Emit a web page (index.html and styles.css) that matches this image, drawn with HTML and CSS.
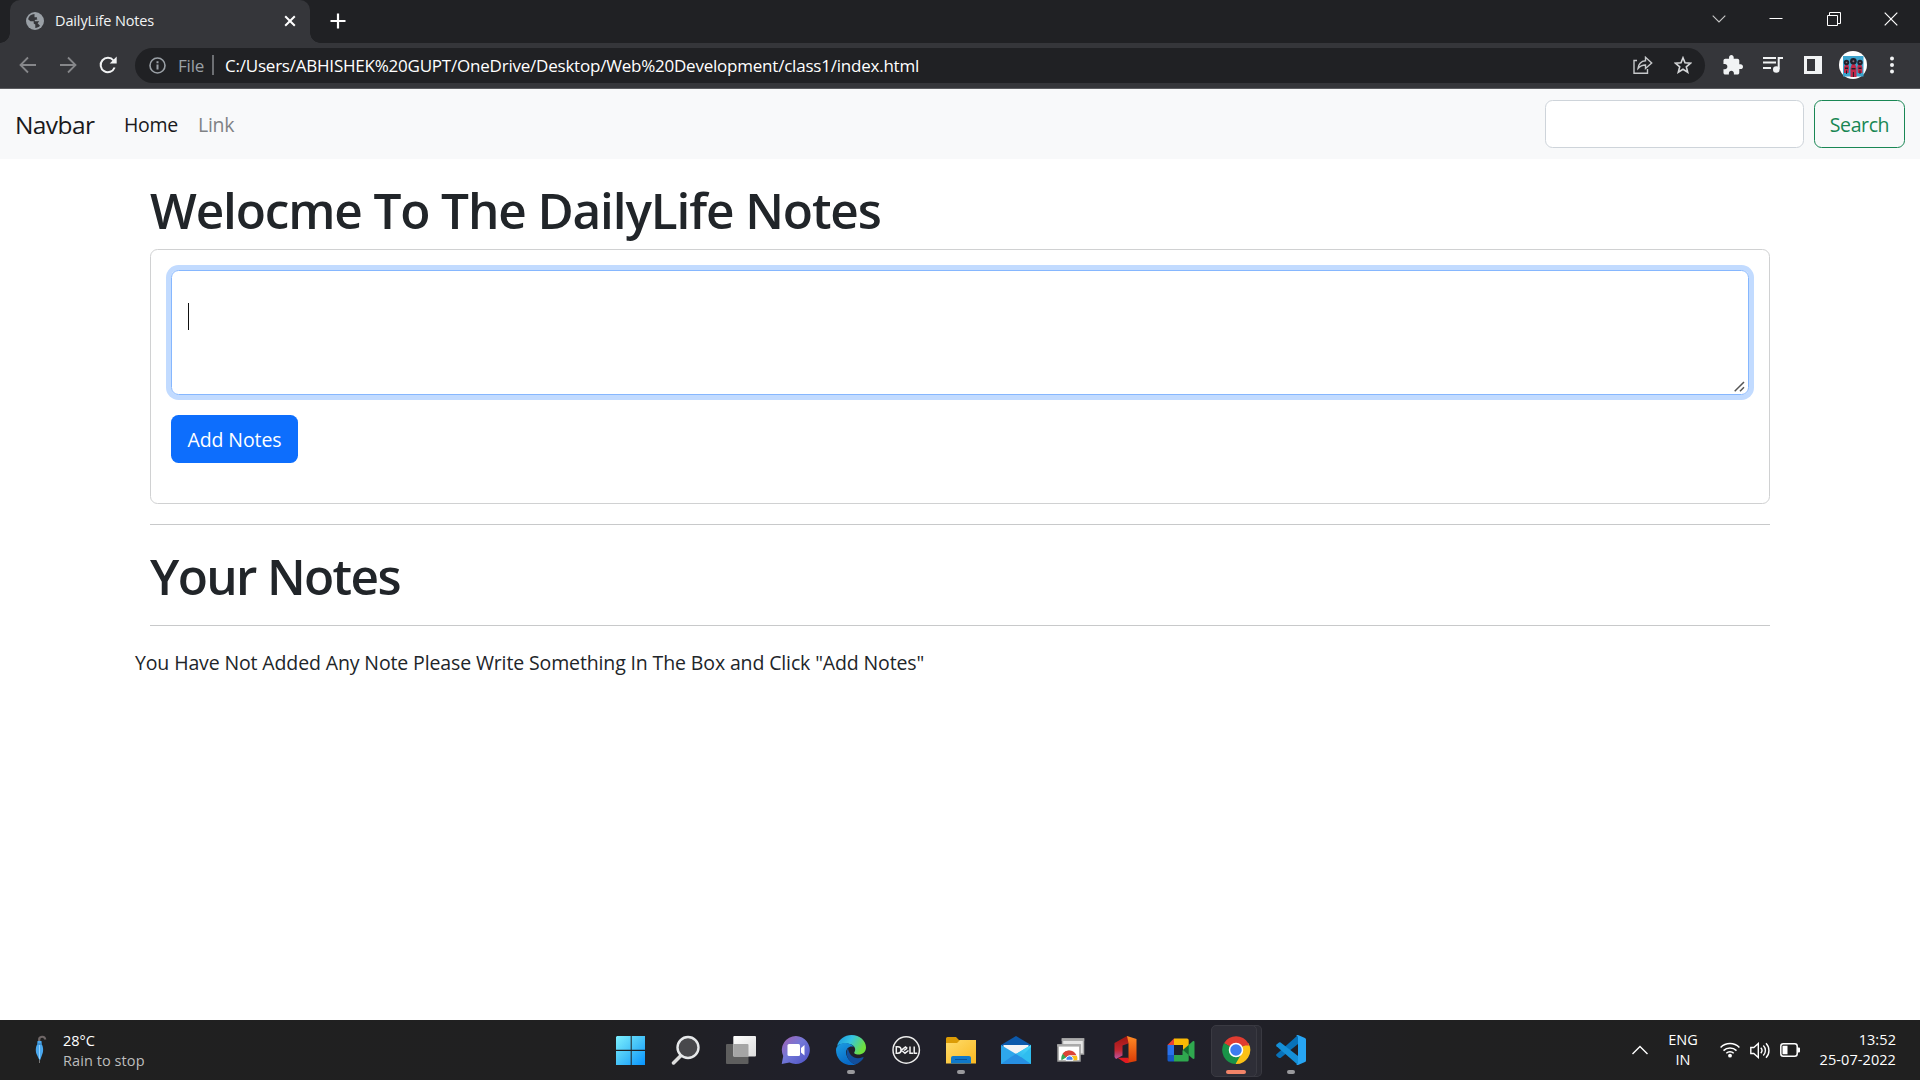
FILE: index.html
```html
<!DOCTYPE html>
<html lang="en">
<head>
<meta charset="utf-8">
<title>DailyLife Notes</title>
<link rel="stylesheet" href="styles.css">
</head>
<body>
<div class="screen">
  <header class="tabstrip">
    <div class="tab">
      <svg class="globe" width="18" height="18" viewBox="0 0 18 18"><circle cx="9" cy="9" r="9" fill="#9aa0a6"/><path d="M8.500 2C5 2.200 2.600 4.300 2.100 7.200L4.500 9.300h3.200v2.200l1.600 1v3.400c2-.1 3.500-.8 4.700-2.200l-2.400-2.400 1.700-2H8.800V8l2.500-.6V5.200H8.500z" fill="#35363a"/><path d="M9 2l2.500 2.200-.8 2 2 1.600.6 1.900 2.700-.2C16.200 5.200 13.200 2 9 2z" fill="#9aa0a6"/></svg>
      <span class="tab-title">DailyLife Notes</span>
      <svg class="tab-close" width="12" height="12" viewBox="0 0 12 12"><path d="M1.200 1.200l9.600 9.600M10.800 1.200l-9.600 9.600" stroke="#fff" stroke-width="2"/></svg>
    </div>
    <svg class="new-tab" width="16" height="16" viewBox="0 0 16 16"><path d="M8 .5v15M.5 8h15" stroke="#fff" stroke-width="2.200"/></svg>
    <div class="window-buttons">
      <svg width="14" height="14" viewBox="0 0 14 14"><path d="M.7 3.700 7 10l6.300-6.300" fill="none" stroke="#c8c8c8" stroke-width="1.100"/></svg>
      <svg width="14" height="14" viewBox="0 0 14 14"><path d="M.5 6.500h13" stroke="#fff"/></svg>
      <svg width="14" height="14" viewBox="0 0 14 14"><path d="M.5 3.500h10v10H.5zM2.500 3.500v-3h11v11h-3" fill="none" stroke="#fff"/></svg>
      <svg width="14" height="14" viewBox="0 0 14 14"><path d="M.7.7l12.600 12.600M13.300.7.7 13.300" stroke="#fff" stroke-width="1.200"/></svg>
    </div>
  </header>

  <div class="toolbar">
    <svg class="nav-back" width="18" height="18" viewBox="0 0 18 18"><path d="M17 9H2M9 1.500 1.500 9 9 16.500" fill="none" stroke="#86878a" stroke-width="1.800"/></svg>
    <svg class="nav-forward" width="18" height="18" viewBox="0 0 18 18"><path d="M1 9h15M9 1.500 16.500 9 9 16.500" fill="none" stroke="#86878a" stroke-width="1.800"/></svg>
    <svg class="nav-reload" width="18" height="18" viewBox="0 0 18 18"><path d="M15.600 11.500A7.200 7.200 0 1 1 14.500 4.500" fill="none" stroke="#f1f3f4" stroke-width="2"/><path d="M17.700.5v7h-7z" fill="#f1f3f4"/></svg>
    <div class="omnibox">
      <svg class="info" width="17" height="17" viewBox="0 0 17 17"><circle cx="8.500" cy="8.500" r="7.500" fill="none" stroke="#9aa0a6" stroke-width="1.600"/><path d="M8.500 7.500v5M8.500 4.200v2" stroke="#9aa0a6" stroke-width="2"/></svg>
      <span class="scheme">File</span>
      <span class="divider"></span>
      <span class="url">C:/Users/ABHISHEK%20GUPT/OneDrive/Desktop/Web%20Development/class1/index.html</span>
      <svg class="share" width="20" height="18" viewBox="0 0 20 18"><path d="M4 4.500H1v12.700h13.500V13M5 12.500C5.200 8.500 8 5 12.500 4.800V1.300L18.700 7l-6.200 5.500V9C9 9 7 10.200 5 12.500z" fill="none" stroke="#c6c8ca" stroke-width="1.400"/></svg>
      <svg class="star" width="18" height="18" viewBox="0 0 18 18"><path d="M9 1.800l2 5 5.600.4-4.300 3.600 1.400 5.400L9 13.300l-4.700 2.900 1.400-5.400L1.400 7.200 7 6.800z" fill="none" stroke="#d4d6d8" stroke-width="1.600"/></svg>
    </div>
    <div class="actions">
      <svg width="20" height="20" viewBox="1.500 1 21.500 21.500"><path fill="#f1f3f4" d="M20.500 11H19V7c0-1.100-.9-2-2-2h-4V3.500C13 2.120 11.880 1 10.500 1S8 2.120 8 3.500V5H4c-1.100 0-1.990.9-1.990 2v3.800H3.500c1.490 0 2.700 1.210 2.700 2.700s-1.210 2.700-2.700 2.700H2V20c0 1.100.9 2 2 2h3.800v-1.500c0-1.490 1.210-2.700 2.700-2.700 1.490 0 2.700 1.210 2.700 2.700V22H17c1.100 0 2-.9 2-2v-4h1.500c1.380 0 2.500-1.120 2.500-2.500S21.880 11 20.500 11z"/></svg>
      <svg width="20" height="20" viewBox="0 0 20 20"><path d="M0 3h13M0 7.500h13M0 13h8" stroke="#f1f3f4" stroke-width="2"/><path d="M15.700 14V3H20" fill="none" stroke="#f1f3f4" stroke-width="2"/><circle cx="13.300" cy="14.500" r="3.300" fill="#f1f3f4"/></svg>
      <svg width="20" height="20" viewBox="0 0 20 20"><path fill="#f1f3f4" fill-rule="evenodd" d="M1 1h18v18H1zM4 4v12h8V4z"/></svg>
      <svg class="avatar" width="28" height="28" viewBox="0 0 28 28"><circle cx="14" cy="14" r="14" fill="#fff"/><path d="M4 5h20.500v20.500H4z" fill="#3da5cf"/><g fill="#c4284a"><path d="M5 22v-6l1.500-3h2.500l1 3-.5 6zM18.800 22l-.5-6 1-3h2.500l1.500 3v6z"/><path d="M11.500 26v-9l1.500-4h3l1.500 4v9z"/></g><g fill="#20202c"><circle cx="7.500" cy="11.500" r="2.700"/><circle cx="21" cy="11.500" r="2.700"/><circle cx="14.400" cy="10.200" r="3.300"/><path d="M12.500 17h4v1.500h-4zM6 16.500h3V18H6zM19.500 16.500h3V18h-3zM7 19.500h1V23H7zM20.500 19.500h1V23h-1zM13.900 21h1v5h-1z"/></g><g fill="#8b6b7a"><circle cx="7.500" cy="11.500" r=".8"/><circle cx="21" cy="11.500" r=".8"/><circle cx="14.400" cy="10.200" r="1"/></g></svg>
      <svg class="menu" width="6" height="18" viewBox="0 0 6 18"><g fill="#f1f3f4"><circle cx="3" cy="2.500" r="2"/><circle cx="3" cy="9" r="2"/><circle cx="3" cy="15.500" r="2"/></g></svg>
    </div>
  </div>

  <nav class="navbar">
    <a class="brand">Navbar</a>
    <a class="nav-link active">Home</a>
    <a class="nav-link">Link</a>
    <form class="search">
      <input class="search-input" type="text" aria-label="Search">
      <button class="search-button" type="button">Search</button>
    </form>
  </nav>

  <main class="container">
    <h1 class="title">Welocme To The DailyLife Notes</h1>
    <section class="card">
      <div class="note-box">
        <span class="caret"></span>
        <svg class="grip" width="11" height="11" viewBox="0 0 11 11"><path d="M.7 10.300l9.300-9.300M6 10.300l4-4" stroke="#555" stroke-width="1.500"/></svg>
      </div>
      <button class="add-button" type="button">Add Notes</button>
    </section>
    <hr class="rule">
    <h1 class="subtitle">Your Notes</h1>
    <hr class="rule">
    <p class="empty">You Have Not Added Any Note Please Write Something In The Box and Click "Add Notes"</p>
  </main>

  <footer class="taskbar">
    <div class="weather">
      <svg width="12" height="30" viewBox="0 0 12 30"><path d="M5 7V5a3 3 0 0 1 6-.5" fill="none" stroke="#6f6767" stroke-width="2.200" transform="translate(-.8)"/><path d="M2.500 6h4l.3 3.500C8.500 12 8.600 17 7 20L4.800 26 2 20C.4 17 .4 12 2.200 9.500z" fill="#4aa8ee"/><path d="M4.500 10v14" stroke="#8fd0ff"/><path d="M2 9h5" stroke="#2f78b5"/><path d="M4.500 25v3" stroke="#777"/></svg>
      <div class="weather-text">
        <span class="temp">28°C</span>
        <span class="cond">Rain to stop</span>
      </div>
    </div>
    <div class="apps">
      <div class="app"><svg width="30" height="30" viewBox="0 0 30 30"><defs><linearGradient id="win" x1="0" y1="0" x2="1" y2="1"><stop offset="0" stop-color="#7df0ff"/><stop offset=".5" stop-color="#46c3f8"/><stop offset="1" stop-color="#0794ff"/></linearGradient></defs><path d="M1 1h13.700v13.700H0V2zM15.700 1h13.300v13.700H15.700zM0 15.900h14.700V30H0zM15.700 15.900h13.300V30H15.700z" fill="url(#win)"/></svg></div>
      <div class="app"><svg width="30" height="30" viewBox="0 0 30 30"><path d="M11 19.500 2.500 28" stroke="#ddd" stroke-width="3.500" stroke-linecap="round"/><circle cx="17" cy="12.500" r="10.500" fill="#48484c" stroke="#e6e8ea" stroke-width="2.400"/></svg></div>
      <div class="app"><svg width="30" height="30" viewBox="0 0 30 30"><defs><linearGradient id="tv" x1="0" y1="0" x2="1" y2="1"><stop offset="0" stop-color="#fff"/><stop offset="1" stop-color="#dcdcdc"/></linearGradient></defs><rect y="9" width="22.500" height="20" rx="1" fill="#5e5e5e"/><rect x="7.300" y="1" width="22.700" height="20.500" rx="1" fill="url(#tv)"/><path d="M7.300 9H21.500a1 1 0 0 1 1 1v11.500H7.300z" fill="#a5a5a5"/></svg></div>
      <div class="app"><svg width="30" height="30" viewBox="0 0 30 30"><defs><linearGradient id="chat" x1="0" y1="0" x2="1" y2="1"><stop offset="0" stop-color="#a75fae"/><stop offset=".45" stop-color="#7378d8"/><stop offset="1" stop-color="#4b50c4"/></linearGradient></defs><path d="M15 1a14 14 0 1 1-6.500 26.500L.7 29l1.500-8A14 14 0 0 1 15 1z" fill="url(#chat)"/><rect x="6.500" y="9" width="12.500" height="12" rx="1.500" fill="#fff"/><path d="M20 13l3.500-3v10.500L20 17.500z" fill="#fff"/></svg></div>
      <div class="app running"><svg width="30" height="30" viewBox="0 0 30 30"><defs><linearGradient id="e1" x1="0" y1="0" x2="1" y2=".4"><stop offset="0" stop-color="#1793df"/><stop offset=".5" stop-color="#35c3e2"/><stop offset="1" stop-color="#6ee03e"/></linearGradient><linearGradient id="e2" x1="0" y1="0" x2=".5" y2="1"><stop offset="0" stop-color="#1b9de2"/><stop offset="1" stop-color="#0868c5"/></linearGradient></defs><path d="M1 11C3 4 8.500 0 15.500 0 24 0 30 6 30 12.500c0 4.500-3.500 7-7.500 7-3.500 0-5-1.500-4-2.500 1.500-2 1-7-5-8C8 8 3 9 1 11z" fill="url(#e1)"/><path d="M0 15C0 10.500 5 7.500 10 8c4 .3 7 2.200 8 4-5-2-10 2.500-7 9.500 2 4.500 7 8 9 8C9 32.500 0 25 0 15z" fill="url(#e2)"/><path d="M12 13c-3 5-1 13 7 16.500 4-1 7-4 8.500-6.500.5-1-.5-1-1-.7C19 25 13 21 12 13z" fill="#124f9d"/></svg></div>
      <div class="app"><svg width="30" height="30" viewBox="0 0 30 30"><circle cx="15.200" cy="15" r="13.200" fill="#242429" stroke="#ececec" stroke-width="1.500"/><path d="M5.300 11.800v6.400h1.600a3.200 3.200 0 0 0 0-6.400zM10.500 15.200l4-3.200 1.800 1.300M10.500 15.200l3.500 3 3.500-2.700M13 15.500l3.200-2.400M19 11.500v6.700h3M23.200 11.500v6.700h3" fill="none" stroke="#f2f2f2" stroke-width="1.500"/></svg></div>
      <div class="app running"><svg width="30" height="30" viewBox="0 0 30 30"><defs><linearGradient id="fold" x1="0" y1="0" x2="1" y2="1"><stop offset="0" stop-color="#ffdc6b"/><stop offset="1" stop-color="#f9b820"/></linearGradient></defs><path d="M0 3.500A1.500 1.500 0 0 1 1.500 2H10l3 3h16v12H0z" fill="#dc9c06"/><path d="M0 8h11l3-3h15.500a1 1 0 0 1 1 1v22.500H0z" fill="url(#fold)"/><path d="M5 28.500V23a2 2 0 0 1 2-2h16a2 2 0 0 1 2 2v5.500z" fill="#0f79ca"/><path d="M9 24.500h12" stroke="#07539b"/></svg></div>
      <div class="app"><svg width="30" height="30" viewBox="0 0 30 30"><defs><linearGradient id="mail" x1="0" y1="1" x2="1" y2="0"><stop offset="0" stop-color="#2fb5f0"/><stop offset="1" stop-color="#49dbf8"/></linearGradient></defs><path d="M0 10 15 1l15 9v9H0z" fill="#0c59ab"/><path d="M2.500 10h25v9L15 24 2.500 19z" fill="#f3f3f5"/><path d="M0 10l15 9-13 10H0z" fill="#2ea7ec"/><path d="M30 10l-15 9 13 10h2z" fill="#2fbdef"/><path d="M0 29l15-10.500L30 29z" fill="#278fe2"/><path d="M15 19 30 10v2L20 22z" fill="url(#mail)"/></svg></div>
      <div class="app"><svg width="30" height="30" viewBox="0 0 30 30"><path d="M6.500 4h21v15h-21z" fill="#e6e6e6" stroke="#aaa" stroke-width="1.500"/><path d="M5.700 3.300h22.500V6H5.700z" fill="#aaa"/><path d="M2 10h22v16H2z" fill="#fff" stroke="#999" stroke-width="1.500"/><path d="M1.200 9.300h23.500v2.300H1.200z" fill="#aaa"/><path d="M5.500 25.300a8 8 0 0 1 8-9.800v5z" fill="#34a853"/><path d="M13.500 21l7.300-.2c.7 1.200.8 3 .4 4.500H17z" fill="#fbc116"/><path d="M6.700 18.700A8 8 0 0 1 20.500 20.300h-7l-3.500 2z" fill="#dc4437"/><path d="M10 25.300a3.600 3.600 0 1 1 7 0z" fill="#4285f4" stroke="#fff"/></svg></div>
      <div class="app"><svg width="30" height="30" viewBox="0 0 30 30"><defs><linearGradient id="off" x1="0" y1="0" x2="0" y2="1"><stop offset="0" stop-color="#9d1510"/><stop offset=".6" stop-color="#c2262e"/><stop offset="1" stop-color="#b956a6"/></linearGradient><linearGradient id="off2" x1="0" y1="0" x2="0" y2="1"><stop offset="0" stop-color="#ff8b25"/><stop offset="1" stop-color="#d93a06"/></linearGradient></defs><path d="M3.500 8 16 1l2.500 2v5l-7 2.500v10L5 24l-1.500-2z" fill="url(#off)"/><path d="M16 1l9.500 3v22L16 28l-.5-3 2-1.500V8z" fill="url(#off2)"/><path d="M6.500 22.700h11V28h-3z" fill="#e21a22"/></svg></div>
      <div class="app"><svg width="30" height="30" viewBox="0 0 30 30"><path d="M1.500 10 8 3.500V10z" fill="#e94235"/><path d="M1.500 10H8v10H1.500z" fill="#2a71ea"/><path d="M1.500 20H8v6.500H3a1.500 1.500 0 0 1-1.500-1.500z" fill="#1559c5"/><path d="M8 3.500h13A1.700 1.700 0 0 1 22.700 5v10L17 19v-9H8z" fill="#fbb904"/><path d="M8 20h8.500v-4.500l6.200-3V25a1.500 1.500 0 0 1-1.500 1.500H8z" fill="#2fa84f"/><path d="M17 15l9.500-8.500c1-.8 2-.5 2 .5v16c0 1-1 1.300-2 .5z" fill="#2fa84f"/><path d="M17 15l5.700-5v10z" fill="#176b32"/></svg></div>
      <div class="app running active-app"><svg width="30" height="30" viewBox="0 0 30 30"><path d="M15 15 3 8.200A14 14 0 0 1 27.200 8.200z" fill="#e13c31"/><path d="M15 15 27.500 8.300A14 14 0 0 1 14.500 29z" fill="#fcc116"/><path d="M15 15l4.500 5.500-5 8.500A14 14 0 0 1 3 8z" fill="#199348"/><path d="M14 8h13.200c.4 1 .5 1.300.8 2.500H15z" fill="#e13c31"/><circle cx="15" cy="15" r="6.500" fill="#3c7cf0" stroke="#fff" stroke-width="1.500"/></svg></div>
      <div class="app running"><svg width="30" height="30" viewBox="0 0 30 30"><path d="M22 0v9L4.500 23 3 23 .5 21q-.7-1 0-1.700z" fill="#0872b9"/><path d="M.5 9.500 3 7.500q.8-.5 1.600 0L22 21v9L.5 11.200q-.7-1 0-1.700z" fill="#1590d8"/><path d="M22 0l7 3q1 .6 1 1.600v20.800q0 1-1 1.500L22 30q-1 .2-2-.8 2 .5 2-1.500V2.300q0-2-2-1.500 1-1 2-.8z" fill="#27a5f3"/></svg></div>
    </div>
    <div class="tray">
      <svg class="chev" width="16" height="16" viewBox="0 0 16 16"><path d="M.5 12 8 4.500l7.500 7.500" fill="none" stroke="#fff" stroke-width="1.400"/></svg>
      <div class="lang"><span>ENG</span><span>IN</span></div>
      <svg class="wifi" width="20" height="16" viewBox="0 0 20 16"><g fill="none" stroke="#fff" stroke-width="1.500"><path d="M.6 5.500a13.300 13.300 0 0 1 18.800 0M3.500 8.600a9.200 9.200 0 0 1 13 0M6.300 11.300a5.300 5.300 0 0 1 7.400 0"/></g><circle cx="10" cy="13.700" r="1.900" fill="#fff"/></svg>
      <svg class="sound" width="20" height="17" viewBox="0 0 20 17"><g fill="none" stroke="#fff" stroke-width="1.400"><path d="M.8 5.500h3L8.300 1.500v14L3.800 11.500h-3z"/><path d="M10.800 5.800a4 4 0 0 1 0 5.400M13.300 3.500a7 7 0 0 1 0 10M16 1.200a10.500 10.500 0 0 1 0 14.600"/></g></svg>
      <svg class="battery" width="20" height="14" viewBox="0 0 20 14"><rect x=".8" y=".8" width="16.400" height="12.400" rx="2.500" fill="none" stroke="#fff" stroke-width="1.500"/><path d="M2.500 2.700h5v8.600h-5zM17.500 4.500H19a1 1 0 0 1 1 1v3a1 1 0 0 1-1 1h-1.500z" fill="#fff"/></svg>
      <div class="clock"><span>13:52</span><span>25-07-2022</span></div>
    </div>
  </footer>
</div>
</body>
</html>
```
FILE: styles.css
```css
* { box-sizing: border-box; }
body { margin: 0; font-family: "Open Sans", "Noto Sans", sans-serif; color: #212529; background: #fff; overflow: hidden; }
svg { display: block; flex: none; }
.screen { width: 1920px; height: 1080px; display: flex; flex-direction: column; }
.tab-title, .scheme, .url, .brand, .nav-link, .title, .subtitle, .empty { white-space: nowrap; }

.tabstrip { height: 43px; flex: none; background: #202124; display: flex; align-items: flex-start; }
.tab { position: relative; width: 300px; height: 43px; margin-left: 10px; background: #35363a; border-radius: 10px 10px 0 0; display: flex; align-items: flex-start; padding: 12px 14px 0 16px; }
.tab::before, .tab::after { content: ""; position: absolute; bottom: 0; width: 10px; height: 10px; }
.tab::before { left: -10px; background: radial-gradient(circle at 0 0, transparent 9.500px, #35363a 10px); }
.tab::after { right: -10px; background: radial-gradient(circle at 100% 0, transparent 9.500px, #35363a 10px); }
.tab-title { margin-left: 11px; margin-top: -1px; font-size: 14.500px; letter-spacing: -0.13px; line-height: 20px; color: #f1f3f4; flex: 1; }
.tab-close { margin: 3px 0 0; }
.new-tab { margin: 13px 0 0 19.500px; }
.window-buttons { margin: 12px 22px 0 auto; display: flex; gap: 43.300px; }

.toolbar { height: 46px; flex: none; background: #35363a; border-bottom: 1px solid #5b5c60; display: flex; align-items: center; padding: 0 15px 1px 19px; }
.nav-forward { margin-left: 22px; }
.nav-reload { margin-left: 22px; }
.omnibox { width: 1570px; height: 35px; flex: none; margin-left: 18px; border-radius: 18px; background: #202124; display: flex; align-items: center; padding: 0 13px 0 14px; }
.scheme { margin-left: 12px; width: 34px; padding-top: 1px; font-size: 17px; letter-spacing: -0.2px; line-height: 24px; color: #9aa0a6; }
.divider { width: 2px; height: 20px; background: #6d6f73; }
.url { margin-left: 11px; flex: 1; padding-top: 1px; font-size: 17px; letter-spacing: -0.22px; line-height: 24px; color: #fff; }
.star { margin-left: 21px; }
.actions { display: flex; align-items: center; margin-left: 18px; gap: 20px; }
.avatar { margin-left: -4px; }
.menu { margin-left: 2px; }

.navbar { height: 70px; flex: none; background: #f8f9fa; display: flex; align-items: center; padding: 0 15px; }
.brand { width: 109px; padding-top: 2px; font-size: 24.500px; letter-spacing: -0.6px; line-height: 38px; color: #1a1a1c; }
.nav-link { width: 74px; padding-top: 2px; font-size: 19.500px; letter-spacing: -0.3px; line-height: 30px; color: #808285; }
.nav-link.active { color: #1a1a1c; }
.search { margin-left: auto; display: flex; gap: 10px; }
.search-input { width: 259px; height: 48px; border: 1px solid #ced4da; border-radius: 7.500px; background: #fff; }
.search-button, .add-button { height: 48px; border-radius: 7.500px; font: 19.500px/30px "Open Sans", sans-serif; padding: 2px 0 0; }
.search-button { width: 91px; border: 1px solid #198754; background: transparent; color: #198754; letter-spacing: -0.4px; }

.container { flex: 1; padding: 22px 150px 0; min-height: 0; }
.title, .subtitle { margin: 0; font-size: 49.500px; font-weight: 550; line-height: 60px; letter-spacing: -1.13px; }
.title { height: 69px; margin-top: -1px; }
.card { height: 255px; border: 1px solid #d0d1d2; border-radius: 7.500px; padding: 20px; }
.note-box { position: relative; height: 125px; border: 1px solid #86b7fe; border-radius: 7.500px; box-shadow: 0 0 0 5px #c2dbff; padding: 32px 16px; }
.caret { display: block; width: 1px; height: 27px; background: #111; }
.grip { position: absolute; right: 3px; bottom: 2px; }
.add-button { display: block; width: 127px; margin-top: 20px; border: 0; background: #0d6efd; color: #fff; letter-spacing: -0.1px; }
.rule { margin: 20px 0 0; border: 0; height: 1px; background: #c8c9ca; }
.subtitle { margin-top: 21px; height: 79px; letter-spacing: -1.65px; }
.subtitle + .rule { margin-top: 0; }
.empty { margin: 22px 0 0 -15px; font-size: 19.500px; letter-spacing: -0.13px; line-height: 30px; }

.taskbar { height: 60px; flex: none; display: grid; grid-template-columns: 603px 715px 1fr; background: linear-gradient(90deg, #202020 0, #202021 30%, #20202a 42%, #20202a 62%, #202021 74%, #202020 100%); color: #fff; font-size: 14.500px; line-height: 20px; }
.weather { display: flex; padding: 11px 0 0 35px; }
.weather svg { margin-top: 4px; }
.weather-text { display: flex; flex-direction: column; margin-left: 16px; }
.cond { color: #bdbdbd; letter-spacing: 0.08px; }
.apps { display: grid; grid-template-columns: repeat(13, 55px); }
.app { position: relative; display: flex; align-items: center; justify-content: center; }
.running::after { content: ""; position: absolute; bottom: 6px; left: 24px; width: 8px; height: 4px; border-radius: 2px; background: #99999d; }
.active-app::before { content: ""; position: absolute; left: 3px; top: 5px; width: 44px; height: 50px; border-radius: 5px; background: #2e2e37; border: 1px solid #3a3a42; box-shadow: 5px 0 0 -1px #2b2b33, 5px 0 0 0 #393941; }
.active-app svg { position: relative; }
.active-app::after { left: 18px; width: 20px; background: #f28468; }
.tray { display: flex; align-items: center; padding-right: 24px; }
.chev { margin-left: 314px; }
.lang { width: 40px; margin-left: 15px; text-align: center; }
.lang, .clock { display: flex; flex-direction: column; }
.wifi { margin-left: 17px; }
.sound { margin-left: 10px; }
.battery { margin-left: 10px; }
.clock { margin-left: auto; text-align: right; letter-spacing: 0.08px; }
```
